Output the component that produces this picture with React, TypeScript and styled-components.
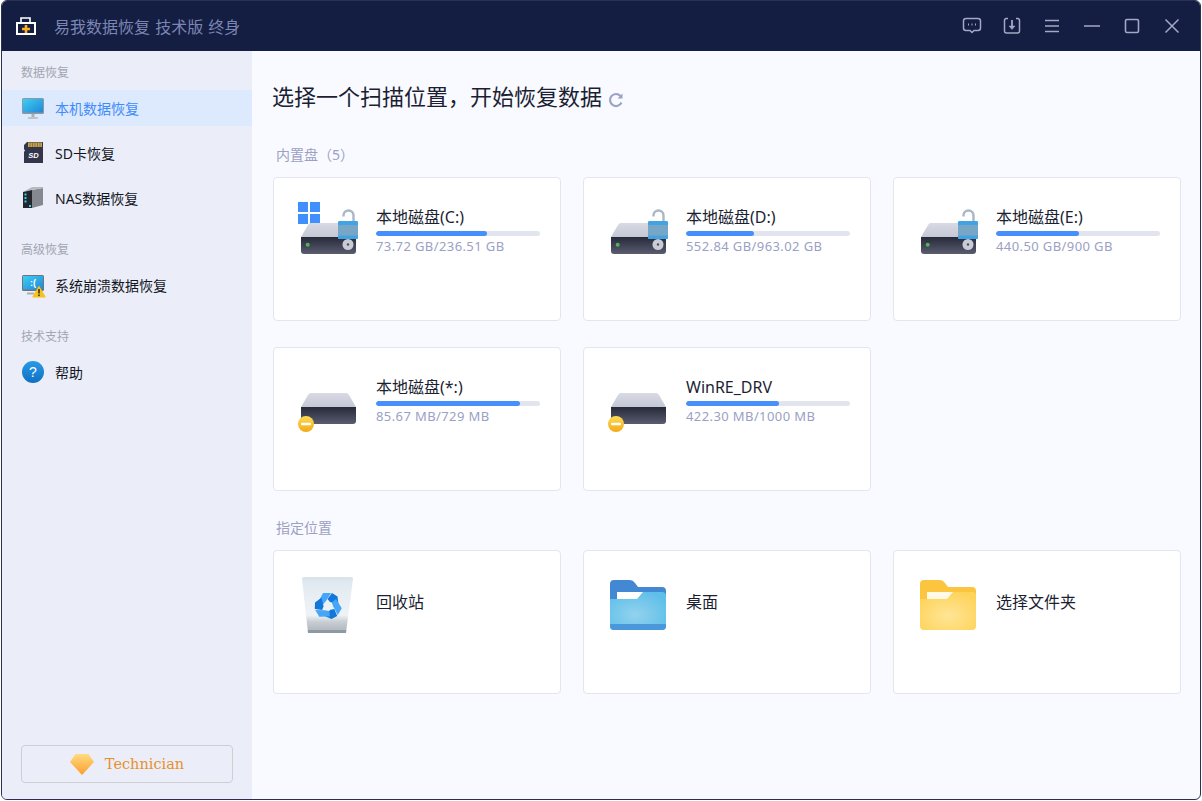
import React from 'react';
import styled, { createGlobalStyle } from 'styled-components';

const FONT = '"Noto Sans", "Noto Sans CJK SC", sans-serif';

const GlobalStyle = createGlobalStyle`
  html, body {
    margin: 0;
    padding: 0;
    background: #ffffff;
    font-family: ${FONT};
  }
`;

const Window = styled.div`
  box-sizing: border-box;
  width: 1200px;
  height: 800px;
  margin-left: 1px;
  display: flex;
  flex-direction: column;
  border: 1px solid #2b3050;
  border-radius: 6px;
  overflow: hidden;
  background: #f9faff;
`;

const TitleBar = styled.header`
  height: 50px;
  flex: none;
  display: flex;
  align-items: center;
  padding: 0 8px 0 13px;
  background: #141d42;
`;

const AppTitle = styled.span`
  margin-left: 17px;
  font-size: 16px;
  color: #7c86b3;
  word-spacing: 1px;
`;

const Controls = styled.div`
  margin-left: auto;
  display: flex;
`;

const ControlButton = styled.div`
  width: 40px;
  height: 50px;
  display: flex;
  align-items: center;
  justify-content: center;
  color: #a3a9c5;
`;

const Body = styled.div`
  flex: 1;
  display: flex;
  min-height: 0;
`;

const Sidebar = styled.aside`
  box-sizing: border-box;
  width: 250px;
  flex: none;
  display: flex;
  flex-direction: column;
  padding: 12px 0 16px;
  background: #ebeef8;
`;

const Group = styled.div`
  margin-bottom: 15px;
`;

const GroupLabel = styled.div`
  height: 18px;
  line-height: 20px;
  margin-bottom: 9px;
  padding-left: 19px;
  font-size: 12px;
  color: #a2a5b2;
`;

const NavItem = styled.div<{ $active?: boolean }>`
  height: 36px;
  margin-bottom: 9px;
  display: flex;
  align-items: center;
  padding-left: 19px;
  font-size: 14px;
  color: ${(p) => (p.$active ? '#3f8cfb' : '#14161f')};
  background: ${(p) => (p.$active ? '#dde9fd' : 'transparent')};
`;

const NavIcon = styled.div`
  width: 26px;
  height: 26px;
  flex: none;
  margin-right: 8px;
`;

const UpgradeButton = styled.div`
  box-sizing: border-box;
  width: 212px;
  height: 38px;
  margin: auto 0 0 19px;
  display: flex;
  align-items: center;
  justify-content: center;
  gap: 11px;
  border: 1px solid #cfcfd2;
  border-radius: 4px;
  font-family: "DejaVu Serif", serif;
  font-size: 14.5px;
  color: #e8912a;
`;

const Main = styled.main`
  flex: 1;
  padding: 29px 0 0 21px;
`;

const Heading = styled.h1`
  height: 32px;
  margin: 0 0 34px -1px;
  display: flex;
  align-items: center;
  gap: 6px;
  font-size: 22px;
  line-height: 32px;
  font-weight: 400;
  color: #1c1f33;
`;

const RefreshIcon = styled.svg`
  margin-top: 7px;
`;

const SectionLabel = styled.div`
  height: 18px;
  line-height: 18px;
  margin: 0 0 13px 3px;
  font-size: 14px;
  color: #9ca1c3;
`;

const CardGrid = styled.div`
  display: grid;
  grid-template-columns: repeat(3, 288px);
  grid-auto-rows: 144px;
  gap: 26px 22px;
  margin-bottom: 28px;
`;

const Card = styled.div`
  box-sizing: border-box;
  display: flex;
  align-items: flex-start;
  padding: 22px 0 0 22px;
  background: #ffffff;
  border: 1px solid #e3e5f0;
  border-radius: 4px;
`;

const IconSlot = styled.div`
  width: 62px;
  height: 62px;
  flex: none;
  margin-right: 18px;
`;

const DriveInfo = styled.div`
  width: 164px;
  padding-top: 5px;
`;

const DriveName = styled.div`
  height: 24px;
  line-height: 24px;
  font-size: 16px;
  color: #1c1f33;
`;

const UsageTrack = styled.div`
  height: 5px;
  margin-top: 2px;
  border-radius: 3px;
  background: #e2e5ee;
  overflow: hidden;
`;

const UsageFill = styled.div<{ $width: number }>`
  height: 100%;
  width: ${(p) => p.$width}px;
  border-radius: 3px;
  background: #468ffc;
`;

const DriveSize = styled.div`
  height: 18px;
  line-height: 18px;
  margin-top: 1px;
  font-size: 13px;
  letter-spacing: 0.4px;
  color: #9ba0c4;
`;

const LocationName = styled.div`
  margin-top: 17px;
  height: 24px;
  line-height: 24px;
  font-size: 16px;
  color: #1c1f33;
`;

const DefsHolder = styled.svg`
  position: absolute;
  width: 0;
  height: 0;
`;

function Gradients() {
  return (
    <DefsHolder aria-hidden="true">
      <defs>
        <linearGradient id="driveTop" x1="0" y1="0" x2="0" y2="1">
          <stop offset="0" stopColor="#d8dae4" />
          <stop offset="1" stopColor="#c4c7d5" />
        </linearGradient>
        <linearGradient id="driveBody" x1="0" y1="0" x2="0" y2="1">
          <stop offset="0" stopColor="#262938" />
          <stop offset="1" stopColor="#5a5d70" />
        </linearGradient>
        <linearGradient id="badge" x1="0" y1="0" x2="0" y2="1">
          <stop offset="0" stopColor="#ffdc55" />
          <stop offset="1" stopColor="#f2a916" />
        </linearGradient>
        <radialGradient id="blueFront" cx="0.45" cy="0.6" r="0.65">
          <stop offset="0" stopColor="#93d2ee" />
          <stop offset="1" stopColor="#5fbfe9" />
        </radialGradient>
        <radialGradient id="yellowFront" cx="0.5" cy="0.62" r="0.65">
          <stop offset="0" stopColor="#ffe596" />
          <stop offset="1" stopColor="#fdd35a" />
        </radialGradient>
        <linearGradient id="binBody" x1="0" y1="0" x2="0" y2="1">
          <stop offset="0" stopColor="#d9e2ea" />
          <stop offset="0.12" stopColor="#e2eaf1" />
          <stop offset="0.68" stopColor="#eff3f7" />
          <stop offset="0.8" stopColor="#c9ced3" />
          <stop offset="0.94" stopColor="#b4bbc1" />
          <stop offset="0.95" stopColor="#8d99a3" />
          <stop offset="1" stopColor="#8d99a3" />
        </linearGradient>
        <linearGradient id="screen" x1="0" y1="0" x2="1" y2="1">
          <stop offset="0" stopColor="#3ed0f2" />
          <stop offset="1" stopColor="#1f86d8" />
        </linearGradient>
        <linearGradient id="help" x1="0" y1="0" x2="0" y2="1">
          <stop offset="0" stopColor="#2a9ae6" />
          <stop offset="1" stopColor="#0f6fc4" />
        </linearGradient>
        <linearGradient id="gem" x1="0" y1="0" x2="0" y2="1">
          <stop offset="0" stopColor="#ffdc80" />
          <stop offset="1" stopColor="#fb9d2c" />
        </linearGradient>
      </defs>
    </DefsHolder>
  );
}

function DriveIcon({ system, locked, offline }: { system?: boolean; locked?: boolean; offline?: boolean }) {
  return (
    <svg width="62" height="62" viewBox="0 0 62 62">
      {system && (
        <g fill="#3f8ffc">
          <rect x="2" y="2" width="10" height="10" />
          <rect x="14" y="2" width="10" height="10" />
          <rect x="2" y="14" width="10" height="10" />
          <rect x="14" y="14" width="10" height="10" />
        </g>
      )}
      <path d="M15 23H50Q52 23 53 25L60 37H5L12 25Q13 23 15 23Z" fill="url(#driveTop)" />
      <path d="M5 37H60V51Q60 54 57 54H8Q5 54 5 51Z" fill="url(#driveBody)" />
      {locked ? (
        <>
          <circle cx="11.7" cy="44.7" r="2" fill="#4fb35a" />
          <circle cx="52" cy="44.5" r="5.5" fill="#c9cbd5" />
          <circle cx="52" cy="44.5" r="1.2" fill="#4c4f60" />
          <path d="M47.5 16.5V15.5a5 5 0 0 1 10 0V21" fill="none" stroke="#a9b7c6" strokeWidth="2.4" />
          <rect x="42" y="21" width="20" height="18" rx="1.5" fill="#78a6c6" />
          <path d="M43.5 21H60.5Q62 21 62 22.5V25H42V22.5Q42 21 43.5 21Z" fill="#42a3e4" />
          <path d="M42 35.5H62V37.5Q62 39 60.5 39H43.5Q42 39 42 37.5Z" fill="#42a3e4" />
        </>
      ) : null}
      {offline && (
        <>
          <circle cx="10" cy="54" r="8" fill="url(#badge)" />
          <rect x="5" y="52.8" width="10" height="2.4" rx="1" fill="#ffffff" />
        </>
      )}
    </svg>
  );
}

function RecycleBinIcon() {
  const piece = (
    <>
      <path d="M22 29.5L27 20H35L30 28L27 31.5Z" fill="#45a5f9" />
      <path d="M31.5 26L36 20L41.5 23.5L42.5 31.5L34 29Z" fill="#1177d8" />
    </>
  );
  return (
    <svg width="62" height="62" viewBox="0 0 62 62">
      <path d="M8 4H55Q57 4 57 6L50 60H12L6 6Q6 4 8 4Z" fill="url(#binBody)" />
      <g>{piece}</g>
      <g transform="rotate(120 32 33)">{piece}</g>
      <g transform="rotate(240 32 33)">{piece}</g>
    </svg>
  );
}

function FolderIcon({ tone }: { tone: 'blue' | 'yellow' }) {
  const blue = tone === 'blue';
  return (
    <svg width="62" height="62" viewBox="0 0 62 62">
      <path
        d="M4 11Q4 7 8 7H24Q27 7 29 10L32 14H56Q60 14 60 18V40H4Z"
        fill={blue ? '#4388d2' : '#fcc53f'}
      />
      <rect x="11" y="19" width="33" height="10" fill={blue ? '#ffffff' : '#fff9e6'} />
      <path
        d="M37 19H56Q60 19 60 23V53Q60 57 56 57H8Q4 57 4 53V26H31Z"
        fill={blue ? 'url(#blueFront)' : 'url(#yellowFront)'}
      />
      {blue && <path d="M4 51H60V53Q60 57 56 57H8Q4 57 4 53Z" fill="#4a98dc" />}
    </svg>
  );
}

function MonitorIcon() {
  return (
    <svg width="26" height="26" viewBox="0 0 26 26">
      <rect x="1" y="3" width="22" height="16" rx="1.5" fill="#8f97a3" />
      <rect x="2" y="4" width="20" height="13.5" fill="url(#screen)" />
      <rect x="10.5" y="19" width="3" height="3" fill="#aab0b8" />
      <rect x="7" y="22" width="10" height="2" rx="0.5" fill="#c0c4ca" />
    </svg>
  );
}

function SdCardIcon() {
  return (
    <svg width="26" height="26" viewBox="0 0 26 26">
      <path d="M6 2H22V23H3V12L4 10.5L3 9V5Z" fill="#33364a" />
      <path d="M7 2.5H21V7H7Z" fill="#c9a24a" />
      <path d="M9 2.5V7M11.5 2.5V7M14 2.5V7M16.5 2.5V7M19 2.5V7" stroke="#7a6a40" strokeWidth="0.8" />
      <text x="12.5" y="17.5" textAnchor="middle" fontSize="7.5" fontWeight="700" fontStyle="italic" fill="#ffffff" fontFamily="Liberation Sans, sans-serif">SD</text>
    </svg>
  );
}

function NasIcon() {
  return (
    <svg width="26" height="26" viewBox="0 0 26 26">
      <path d="M11 5L22 3V20L11 23Z" fill="#85888e" />
      <path d="M2 7L11 2L22 2V3L11 5L2 7Z" fill="#b6b9be" />
      <path d="M2 7L11 5V23H2Z" fill="#24262e" />
      <g fill="#37d0e6">
        <rect x="3.5" y="8.5" width="2" height="2" />
        <rect x="3.5" y="12" width="2" height="2" />
        <rect x="3.5" y="15.5" width="2" height="2" />
        <rect x="8" y="20" width="2" height="2" />
      </g>
    </svg>
  );
}

function CrashIcon() {
  return (
    <svg width="26" height="26" viewBox="0 0 26 26">
      <rect x="1" y="3" width="22" height="16" rx="1.5" fill="#6d7480" />
      <rect x="2" y="4" width="20" height="13.5" fill="url(#screen)" />
      <text x="12" y="14" textAnchor="middle" fontSize="9" fontWeight="700" fill="#ffffff" fontFamily="Liberation Sans, sans-serif">:(</text>
      <rect x="6" y="20.5" width="7" height="2" fill="#aab0b8" />
      <path d="M18 13.5L24.5 24.5Q25 25.5 24 25.5H12Q11 25.5 11.5 24.5Z" fill="#f7c21c" />
      <rect x="17.2" y="17" width="1.6" height="4.5" fill="#3a3320" />
      <rect x="17.2" y="22.5" width="1.6" height="1.6" fill="#3a3320" />
    </svg>
  );
}

function HelpIcon() {
  return (
    <svg width="26" height="26" viewBox="0 0 26 26">
      <circle cx="12" cy="13" r="11" fill="url(#help)" />
      <text x="12" y="18" textAnchor="middle" fontSize="14" fill="#ffffff" fontFamily="Liberation Sans, sans-serif">?</text>
    </svg>
  );
}

const drives = [
  { name: '本地磁盘(C:)', size: '73.72 GB/236.51 GB', used: 111, system: true, locked: true },
  { name: '本地磁盘(D:)', size: '552.84 GB/963.02 GB', used: 68, locked: true },
  { name: '本地磁盘(E:)', size: '440.50 GB/900 GB', used: 83, locked: true },
  { name: '本地磁盘(*:)', size: '85.67 MB/729 MB', used: 144, offline: true },
  { name: 'WinRE_DRV', size: '422.30 MB/1000 MB', used: 93, offline: true },
];

export default function App() {
  return (
    <>
      <GlobalStyle />
      <Gradients />
      <Window>
        <TitleBar>
          <svg width="22" height="22" viewBox="0 0 22 22">
            <path d="M6 7V3H15V7" fill="none" stroke="#ffffff" strokeWidth="1.6" />
            <rect x="2" y="8" width="18" height="11" fill="#141d42" stroke="#ffffff" strokeWidth="2" />
            <path d="M11 10V18M7 14H15" stroke="#fbb024" strokeWidth="2.6" />
          </svg>
          <AppTitle>易我数据恢复 技术版 终身</AppTitle>
          <Controls>
            <ControlButton>
              <svg width="20" height="18" viewBox="0 0 20 18" fill="none" stroke="currentColor" strokeWidth="1.5">
                <path d="M4 1.5H16Q18.5 1.5 18.5 4V11Q18.5 13.5 16 13.5H12L10 15.5L8 13.5H4Q1.5 13.5 1.5 11V4Q1.5 1.5 4 1.5Z" />
                <path d="M6 7.5H7M9.5 7.5H10.5M13 7.5H14" strokeWidth="1.8" />
              </svg>
            </ControlButton>
            <ControlButton>
              <svg width="18" height="18" viewBox="0 0 18 18" fill="none" stroke="currentColor" strokeWidth="1.5">
                <path d="M5 1.5H3.5Q1.5 1.5 1.5 3.5V14Q1.5 16 3.5 16H14.5Q16.5 16 16.5 14V3.5Q16.5 1.5 14.5 1.5H13" />
                <path d="M9 3V11" strokeWidth="1.8" />
                <path d="M6 9L9 12.5L12 9Z" fill="currentColor" strokeWidth="0.5" />
              </svg>
            </ControlButton>
            <ControlButton>
              <svg width="16" height="14" viewBox="0 0 16 14" stroke="currentColor" strokeWidth="1.5">
                <path d="M1 1.5H15M1 7H15M1 12.5H15" />
              </svg>
            </ControlButton>
            <ControlButton>
              <svg width="18" height="14" viewBox="0 0 18 14" stroke="currentColor" strokeWidth="1.5">
                <path d="M1 7H17" />
              </svg>
            </ControlButton>
            <ControlButton>
              <svg width="16" height="16" viewBox="0 0 16 16" fill="none" stroke="currentColor" strokeWidth="1.6">
                <rect x="1.5" y="1.5" width="13" height="13" rx="1.5" />
              </svg>
            </ControlButton>
            <ControlButton>
              <svg width="16" height="16" viewBox="0 0 16 16" stroke="currentColor" strokeWidth="1.5">
                <path d="M1.5 1.5L14.5 14.5M14.5 1.5L1.5 14.5" />
              </svg>
            </ControlButton>
          </Controls>
        </TitleBar>
        <Body>
          <Sidebar>
            <Group>
              <GroupLabel>数据恢复</GroupLabel>
              <NavItem $active>
                <NavIcon><MonitorIcon /></NavIcon>本机数据恢复
              </NavItem>
              <NavItem>
                <NavIcon><SdCardIcon /></NavIcon>SD卡恢复
              </NavItem>
              <NavItem>
                <NavIcon><NasIcon /></NavIcon>NAS数据恢复
              </NavItem>
            </Group>
            <Group>
              <GroupLabel>高级恢复</GroupLabel>
              <NavItem>
                <NavIcon><CrashIcon /></NavIcon>系统崩溃数据恢复
              </NavItem>
            </Group>
            <Group>
              <GroupLabel>技术支持</GroupLabel>
              <NavItem>
                <NavIcon><HelpIcon /></NavIcon>帮助
              </NavItem>
            </Group>
            <UpgradeButton>
              <svg width="24" height="21" viewBox="0 0 24 21">
                <path d="M5.5 0H18.5L24 8L12 21L0 8Z" fill="url(#gem)" />
              </svg>
              Technician
            </UpgradeButton>
          </Sidebar>
          <Main>
            <Heading>
              选择一个扫描位置，开始恢复数据
              <RefreshIcon width="16" height="16" viewBox="0 0 16 16" fill="none" stroke="#9aa2c8" strokeWidth="2.2">
                <path d="M13.5 10.5A6 6 0 1 1 12.5 4" />
                <path d="M14.5 1.5V6.5H9.5Z" fill="#9aa2c8" stroke="none" />
              </RefreshIcon>
            </Heading>
            <SectionLabel>内置盘（5）</SectionLabel>
            <CardGrid>
              {drives.map((d) => (
                <Card key={d.name}>
                  <IconSlot>
                    <DriveIcon system={d.system} locked={d.locked} offline={d.offline} />
                  </IconSlot>
                  <DriveInfo>
                    <DriveName>{d.name}</DriveName>
                    <UsageTrack>
                      <UsageFill $width={d.used} />
                    </UsageTrack>
                    <DriveSize>{d.size}</DriveSize>
                  </DriveInfo>
                </Card>
              ))}
            </CardGrid>
            <SectionLabel>指定位置</SectionLabel>
            <CardGrid>
              <Card>
                <IconSlot><RecycleBinIcon /></IconSlot>
                <LocationName>回收站</LocationName>
              </Card>
              <Card>
                <IconSlot><FolderIcon tone="blue" /></IconSlot>
                <LocationName>桌面</LocationName>
              </Card>
              <Card>
                <IconSlot><FolderIcon tone="yellow" /></IconSlot>
                <LocationName>选择文件夹</LocationName>
              </Card>
            </CardGrid>
          </Main>
        </Body>
      </Window>
    </>
  );
}
